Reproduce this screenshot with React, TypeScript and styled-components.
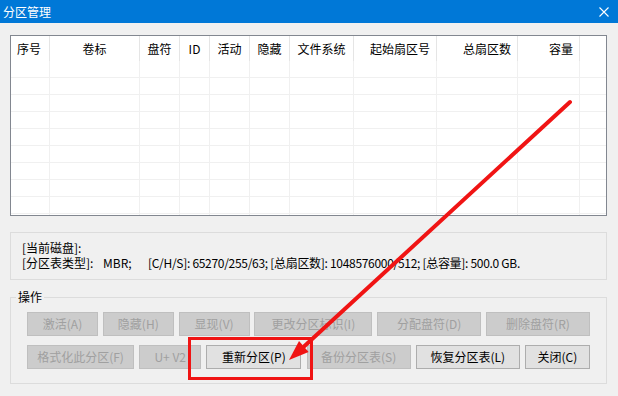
import React from "react";
import styled, { createGlobalStyle } from "styled-components";

const GlobalStyle = createGlobalStyle`
  html, body { margin: 0; padding: 0; background: #f0f0f0; }
  body {
    font-family: "Noto Sans CJK SC", "Noto Sans", sans-serif;
    font-size: 12px;
    color: #000;
  }
  * { box-sizing: border-box; }
`;

const Window = styled.div`
  position: relative;
  width: 618px;
  height: 396px;
  overflow: hidden;
  background: #f0f0f0;
  display: flex;
  flex-direction: column;
`;

const TitleBar = styled.div`
  height: 23px;
  flex: none;
  background: #0078d7;
  color: #fff;
  display: flex;
  align-items: center;
  justify-content: space-between;
  padding: 0 9px 0 3px;
  font-size: 12px;
  line-height: 16px;
`;

const Body = styled.div`
  display: flex;
  flex-direction: column;
  padding: 12px 11px 0 10px;
`;

const Table = styled.div`
  height: 181px;
  border: 1px solid #828790;
  background: #fff;
  overflow: hidden;
`;

const Grid = styled.div`
  display: grid;
  grid-template-columns: 39px 90px 40px 30px 40px 40px 64px 83px 81px 62px 1fr;
  grid-template-rows: 25px;
  grid-auto-rows: 17px;
`;

const HeadCell = styled.div<{ $align?: "left" | "center" | "right"; $last?: boolean }>`
  line-height: 25px;
  padding: 0 6px;
  white-space: nowrap;
  overflow: hidden;
  text-align: ${(p) => p.$align ?? "center"};
  border-right: ${(p) => (p.$last ? "none" : "1px solid #e5e5e5")};
`;

const BodyCell = styled.div<{ $last?: boolean }>`
  border-bottom: 1px solid #f0f0f0;
  border-right: ${(p) => (p.$last ? "none" : "1px solid #f0f0f0")};
`;

const InfoBox = styled.div`
  margin-top: 16px;
  height: 48px;
  border: 1px solid #dcdcdc;
  padding: 7px 11px 0;
  line-height: 15px;
  white-space: nowrap;
`;

const InfoLine = styled.div`
  display: flex;
  height: 15px;
`;

const Field = styled.span<{ $w?: number; $tight?: boolean }>`
  display: inline-block;
  width: ${(p) => (p.$w ? `${p.$w}px` : "auto")};
  letter-spacing: ${(p) => (p.$tight ? "-0.3px" : "0")};
  flex: none;
`;

const Group = styled.div`
  position: relative;
  margin-top: 17px;
  height: 87px;
  border: 1px solid #dcdcdc;
  padding: 14px 16px 0;
  display: flex;
  flex-direction: column;
  gap: 9px;
`;

const Legend = styled.span`
  position: absolute;
  top: -9px;
  left: 5px;
  padding: 0 2px;
  background: #f0f0f0;
  line-height: 16px;
`;

const ButtonRow = styled.div`
  display: flex;
  justify-content: space-between;
`;

const Button = styled.button<{ $w: number }>`
  width: ${(p) => p.$w}px;
  height: 24px;
  padding: 0;
  font-family: inherit;
  font-size: 12px;
  line-height: 22px;
  white-space: nowrap;
  overflow: hidden;
  background: #e1e1e1;
  border: 1px solid #adadad;
  color: #000;
  border-radius: 0;
  &:disabled {
    background: #cccccc;
    border-color: #bfbfbf;
    color: #a0a0a0;
  }
`;

const Overlay = styled.svg`
  position: absolute;
  left: 0;
  top: 0;
  pointer-events: none;
`;

const columns: { label: string; align: "left" | "center" | "right" }[] = [
  { label: "序号", align: "left" },
  { label: "卷标", align: "center" },
  { label: "盘符", align: "center" },
  { label: "ID", align: "center" },
  { label: "活动", align: "center" },
  { label: "隐藏", align: "center" },
  { label: "文件系统", align: "center" },
  { label: "起始扇区号", align: "right" },
  { label: "总扇区数", align: "right" },
  { label: "容量", align: "right" },
];

const row1 = [
  { t: "激活(A)", w: 71, d: true },
  { t: "隐藏(H)", w: 71, d: true },
  { t: "显现(V)", w: 71, d: true },
  { t: "更改分区标识(I)", w: 118, d: true },
  { t: "分配盘符(D)", w: 104, d: true },
  { t: "删除盘符(R)", w: 104, d: true },
];

const row2 = [
  { t: "格式化此分区(F)", w: 107, d: true },
  { t: "U+ V2", w: 62, d: true },
  { t: "重新分区(P)", w: 95, d: false },
  { t: "备份分区表(S)", w: 104, d: true },
  { t: "恢复分区表(L)", w: 104, d: false },
  { t: "关闭(C)", w: 65, d: false },
];

export default function App() {
  const rows = Array.from({ length: 10 });
  return (
    <>
      <GlobalStyle />
      <Window>
        <TitleBar>
          <span>分区管理</span>
          <svg width="10" height="10" viewBox="0 0 10 10">
            <path d="M0.5 0.5 L9.5 9.5 M9.5 0.5 L0.5 9.5" stroke="#fff" strokeWidth="1.1" fill="none" />
          </svg>
        </TitleBar>
        <Body>
          <Table>
            <Grid>
              {columns.map((c) => (
                <HeadCell key={c.label} $align={c.align}>
                  {c.label}
                </HeadCell>
              ))}
              <HeadCell $last />
              {rows.map((_, r) =>
                Array.from({ length: 11 }).map((__, i) => (
                  <BodyCell key={`${r}-${i}`} $last={i === 10} />
                ))
              )}
            </Grid>
          </Table>
          <InfoBox>
            <InfoLine>[当前磁盘]:</InfoLine>
            <InfoLine>
              <Field $w={81}>[分区表类型]:</Field>
              <Field $w={45}>MBR;</Field>
              <Field $tight>[C/H/S]: 65270/255/63; [总扇区数]: 1048576000/512; [总容量]: 500.0 GB.</Field>
            </InfoLine>
          </InfoBox>
          <Group>
            <Legend>操作</Legend>
            <ButtonRow>
              {row1.map((b) => (
                <Button key={b.t} $w={b.w} disabled={b.d}>
                  {b.t}
                </Button>
              ))}
            </ButtonRow>
            <ButtonRow>
              {row2.map((b) => (
                <Button key={b.t} $w={b.w} disabled={b.d}>
                  {b.t}
                </Button>
              ))}
            </ButtonRow>
          </Group>
        </Body>
        <Overlay width="618" height="396" viewBox="0 0 618 396">
          <rect x="189.5" y="338.5" width="122" height="40" fill="none" stroke="#f01414" strokeWidth="3" />
          <line x1="570" y1="102" x2="304" y2="346.5" stroke="#f01414" strokeWidth="4" strokeLinecap="round" />
          <polygon points="289,360 308.6,352 299,341" fill="#f01414" />
        </Overlay>
      </Window>
    </>
  );
}
